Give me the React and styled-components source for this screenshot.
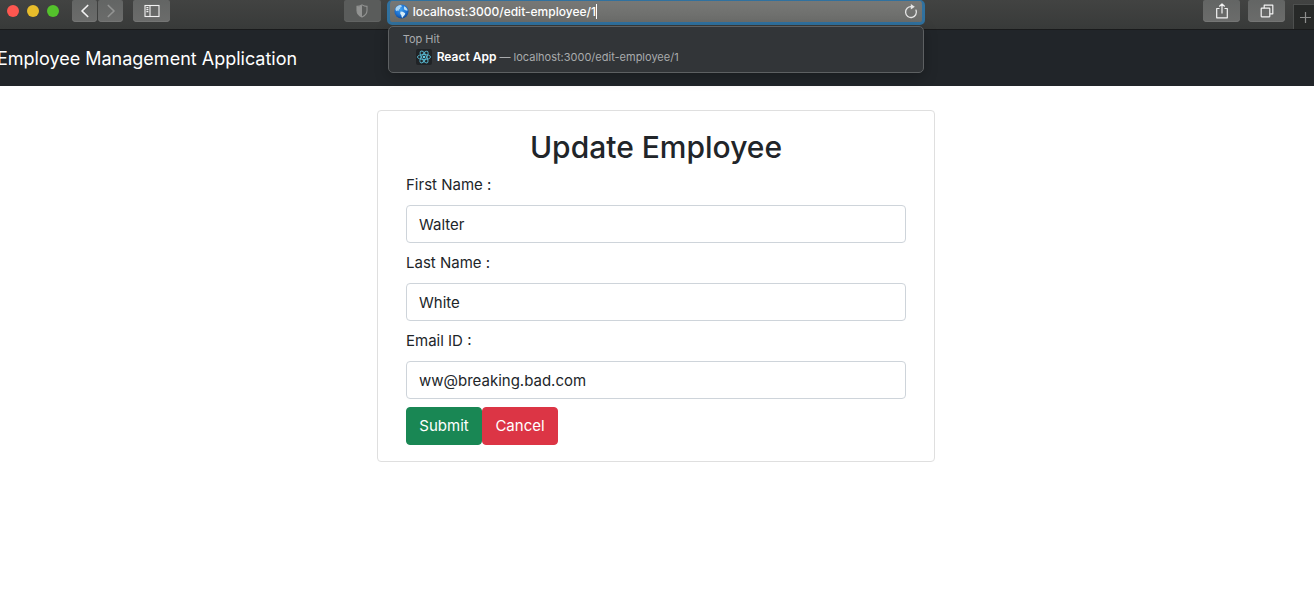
import React from "react";
import styled, { createGlobalStyle } from "styled-components";

const Global = createGlobalStyle`
  *, *::before, *::after { box-sizing: border-box; }
  body {
    margin: 0;
    background: #fff;
    color: #212529;
    font-family: Inter, "Liberation Sans", sans-serif;
    font-size: 15px;
    line-height: 24px;
    overflow-x: hidden;
  }
  button, input { font: inherit; color: inherit; margin: 0; }
`;

const Toolbar = styled.header`
  display: flex;
  height: 30px;
  background: linear-gradient(#424342, #383a39);
  border-bottom: 1px solid #191a1b;
`;

const Side = styled.div`
  display: flex;
  flex: 1;
  min-width: 0;
  overflow: hidden;
`;

const Lights = styled.div`
  display: flex;
  gap: 8px;
  padding: 5px 13px 0 7px;
`;

const Light = styled.span`
  width: 12px;
  height: 12px;
  border-radius: 50%;
  background: ${(p) => p.$color};
`;

const ToolButton = styled.button`
  display: flex;
  align-items: center;
  justify-content: center;
  flex: none;
  width: ${(p) => (p.$small ? "25px" : "37px")};
  height: 22px;
  padding: 0;
  border: 0;
  border-radius: 2px 2px 4px 4px;
  background: ${(p) => (p.$muted ? "#5a5c5b" : "linear-gradient(#636564, #6b6c6b)")};
  box-shadow: inset 0 -1px 0 ${(p) => (p.$muted ? "#626463" : "#757675")};
  color: ${(p) => (p.$dim ? "#939493" : "#f2f2f2")};
`;

const NavPair = styled.div`
  display: flex;
  gap: 1px;
  margin-right: 10px;
`;

const ShieldSlot = styled.div`
  display: flex;
  margin: 0 6px 0 auto;
`;

const Actions = styled.div`
  display: flex;
  gap: 8px;
  margin-left: auto;
`;

const NewTab = styled.button`
  display: flex;
  align-items: center;
  align-self: flex-end;
  width: 21px;
  height: 25px;
  padding: 0 0 0 5px;
  border: solid #4d4f4e;
  border-width: 1px 0 0 1px;
  background: #272928;
  color: #8d8e8d;
  overflow: hidden;
`;

const Address = styled.div`
  position: relative;
  width: 41%;
  height: 25px;
  margin-right: 2px;
  border: solid #30719f;
  border-width: 1px 3px 3px;
  border-radius: 5px;
  background: linear-gradient(#777876, #6b6c6a);
`;

const AddressRow = styled.div`
  display: flex;
  align-items: center;
  height: 21px;
  padding: 0 4px;
`;

const UrlInput = styled.input`
  field-sizing: content;
  padding: 0;
  margin-left: 4px;
  border: 0;
  outline: 0;
  background: transparent;
  color: #fff;
  font-size: 12px;
  font-weight: 500;
  line-height: 18px;
`;

const Caret = styled.span`
  width: 1px;
  height: 15px;
  background: #fff;
`;

const Reload = styled.button`
  display: flex;
  margin-left: auto;
  padding: 0;
  border: 0;
  background: none;
  color: #e6e6e6;
`;

const Suggestions = styled.div`
  position: absolute;
  z-index: 1;
  top: 25px;
  left: -2px;
  right: -2px;
  height: 47px;
  padding: 3px 14px;
  border: 1px solid #5d6062;
  border-radius: 5px;
  background: #323538;
  box-shadow: 0 4px 14px rgba(0, 0, 0, 0.25);
  color: #a9abad;
  font-size: 11px;
  line-height: 18px;
`;

const Hit = styled.a`
  display: flex;
  align-items: center;
  gap: 5px;
  padding-left: 13px;
  color: inherit;
  text-decoration: none;
  white-space: nowrap;
`;

const HitTitle = styled.strong`
  color: #fff;
  font-size: 12px;
  font-weight: 600;
`;

const AppBar = styled.nav`
  height: 56px;
  padding: 12px 0;
  overflow: hidden;
  background: #212529;
`;

const Brand = styled.a`
  display: block;
  margin-left: -3px;
  color: #fff;
  font-size: 18px;
  line-height: 34px;
  text-decoration: none;
  white-space: nowrap;
`;

const Main = styled.main`
  padding: 24px 18px 24px 16px;
`;

const Card = styled.section`
  max-width: 558px;
  margin: 0 auto;
  padding: 16px 28px;
  border: 1px solid #dfdfdf;
  border-radius: 4px;
`;

const Title = styled.h2`
  margin: 0 0 6px;
  font-size: 30px;
  font-weight: 500;
  line-height: 40px;
  text-align: center;
`;

const Field = styled.div`
  margin-bottom: 8px;
`;

const Label = styled.label`
  display: block;
  margin-bottom: 8px;
`;

const TextInput = styled.input`
  display: block;
  width: 100%;
  height: 38px;
  padding: 6px 12px;
  border: 1px solid #ced4da;
  border-radius: 4px;
  background: #fff;
`;

const Buttons = styled.div`
  display: flex;
`;

const FormButton = styled.button`
  min-width: 76px;
  height: 38px;
  padding: 0 12px;
  border: 1px solid ${(p) => p.$color};
  border-radius: 4px;
  background: ${(p) => p.$color};
  color: #fff;
`;

const Chevron = ({ right }) => (
  <svg width="10" height="14" viewBox="0 0 10 14" fill="none" stroke="currentColor" strokeWidth="1.7" strokeLinecap="round" strokeLinejoin="round">
    <path d={right ? "M2.3 1.5 L8 7 L2.3 12.500" : "M7.700 1.500 L2 7 L7.700 12.500"} />
  </svg>
);

const SidebarIcon = () => (
  <svg width="16" height="14" viewBox="0 0 16 14" fill="none" stroke="currentColor" strokeWidth="1.1">
    <rect x="1" y="1.5" width="14" height="11" />
    <path d="M6 1.5v11M2.4 3.6h2M2.4 5.6h2M2.4 7.6h2" />
  </svg>
);

const ShieldIcon = () => (
  <svg width="12" height="14" viewBox="0 0 12 14">
    <path d="M6 .9c1.7 1.1 3.3 1.5 5 1.5v4.2c0 3.1-2 5.2-5 6.5-3-1.3-5-3.4-5-6.5V2.4C2.7 2.4 4.3 2 6 .9z" fill="none" stroke="#929392" strokeWidth="1.1" />
    <path d="M6 .9v12.2c-3-1.3-5-3.4-5-6.5V2.4C2.7 2.4 4.3 2 6 .9z" fill="#929392" />
  </svg>
);

const GlobeIcon = () => (
  <svg width="15" height="15" viewBox="0 0 15 15">
    <defs>
      <radialGradient id="sea" cx="45%" cy="35%" r="65%">
        <stop offset="0" stopColor="#3fa0f2" />
        <stop offset="0.65" stopColor="#1c70d0" />
        <stop offset="1" stopColor="#104a9a" />
      </radialGradient>
    </defs>
    <circle cx="7.5" cy="7.5" r="7" fill="url(#sea)" />
    <path d="M1.600 4.200C2.700 2.300 4.500 1.200 6.600 1.100L8 2 7.200 3.300 5.900 3.700 6.300 4.800 5 5.600 4.500 7 3.200 6.600 2.500 7.300 1.500 6z" fill="#a9d4f3" />
    <path d="M6.500 7.600l2.200.2 2.500 1.500-.5 1.700-1.300 1.200-.7 1.500-1-.4-.3-1.900-1.200-1.700z" fill="#d6ecf8" />
    <path d="M10 2.300l1.800.9 1.600 2-.1 1.800-1.500-.8-1.200-.2-.7-1.400z" fill="#b9ddf5" />
  </svg>
);

const ReloadIcon = () => (
  <svg width="14" height="15" viewBox="0 0 14 15" fill="none">
    <path d="M12 6.100A5.400 5.400 0 1 1 7.300 2.700" stroke="currentColor" strokeWidth="1.300" strokeLinecap="round" />
    <path d="M6.800 0L10.800 2.800 6.800 5.600z" fill="currentColor" />
  </svg>
);

const ReactIcon = () => (
  <svg width="16" height="16" viewBox="0 0 16 16">
    <rect width="16" height="16" rx="2" fill="#202326" />
    <circle cx="8" cy="8" r="1.3" fill="#61cbe4" />
    <g fill="none" stroke="#57b7cf" strokeWidth="0.9">
      <ellipse cx="8" cy="8" rx="6.6" ry="2.5" />
      <ellipse cx="8" cy="8" rx="6.6" ry="2.5" transform="rotate(60 8 8)" />
      <ellipse cx="8" cy="8" rx="6.6" ry="2.5" transform="rotate(120 8 8)" />
    </g>
  </svg>
);

const ShareIcon = () => (
  <svg width="14" height="18" viewBox="0 0 14 18" fill="none" stroke="currentColor" strokeWidth="1.2" strokeLinejoin="round">
    <path d="M4.500 6.500H1.700v9.300h10.600V6.500H9.500M7 11.500V2M4.300 4.500L7 1.800l2.700 2.700" />
  </svg>
);

const TabsIcon = () => (
  <svg width="14" height="14" viewBox="0 0 14 14" fill="none" stroke="currentColor" strokeWidth="1.2" strokeLinejoin="round">
    <rect x="1.2" y="4.2" width="8.6" height="8.6" rx="0.5" />
    <path d="M4.200 4.200V1.200h8.600v8.600h-3" />
  </svg>
);

const PlusIcon = () => (
  <svg width="12" height="12" viewBox="0 0 12 12" stroke="currentColor" strokeWidth="1.2">
    <path d="M6.500 1v11M1 6.500h11" />
  </svg>
);

const fields = [
  { id: "firstName", label: "First Name :", value: "Walter", type: "text" },
  { id: "lastName", label: "Last Name :", value: "White", type: "text" },
  { id: "email", label: "Email ID :", value: "ww@breaking.bad.com", type: "email" },
];

export default function App() {
  return (
    <>
      <Global />
      <Toolbar>
        <Side>
          <Lights>
            <Light $color="#fe5750" />
            <Light $color="#e8bd2b" />
            <Light $color="#54c22c" />
          </Lights>
          <NavPair>
            <ToolButton $small aria-label="Back"><Chevron /></ToolButton>
            <ToolButton $small $dim aria-label="Forward"><Chevron right /></ToolButton>
          </NavPair>
          <ToolButton aria-label="Show sidebar"><SidebarIcon /></ToolButton>
          <ShieldSlot>
            <ToolButton $dim $muted aria-label="Privacy report"><ShieldIcon /></ToolButton>
          </ShieldSlot>
        </Side>
        <Address>
          <AddressRow>
            <GlobeIcon />
            <UrlInput aria-label="Address" defaultValue="localhost:3000/edit-employee/1" spellCheck={false} />
            <Caret />
            <Reload aria-label="Reload"><ReloadIcon /></Reload>
          </AddressRow>
          <Suggestions>
            <div>Top Hit</div>
            <Hit href="#top-hit">
              <ReactIcon />
              <span>
                <HitTitle>React App</HitTitle> — localhost:3000/edit-employee/1
              </span>
            </Hit>
          </Suggestions>
        </Address>
        <Side>
          <Actions>
            <ToolButton aria-label="Share"><ShareIcon /></ToolButton>
            <ToolButton aria-label="Show all tabs"><TabsIcon /></ToolButton>
            <NewTab aria-label="New tab"><PlusIcon /></NewTab>
          </Actions>
        </Side>
      </Toolbar>
      <AppBar>
        <Brand href="#home">Employee Management Application</Brand>
      </AppBar>
      <Main>
        <Card>
          <Title>Update Employee</Title>
          <form onSubmit={(e) => e.preventDefault()}>
            {fields.map((f) => (
              <Field key={f.id}>
                <Label htmlFor={f.id}>{f.label}</Label>
                <TextInput id={f.id} name={f.id} type={f.type} defaultValue={f.value} />
              </Field>
            ))}
            <Buttons>
              <FormButton type="submit" $color="#198754">Submit</FormButton>
              <FormButton type="button" $color="#dc3545">Cancel</FormButton>
            </Buttons>
          </form>
        </Card>
      </Main>
    </>
  );
}
